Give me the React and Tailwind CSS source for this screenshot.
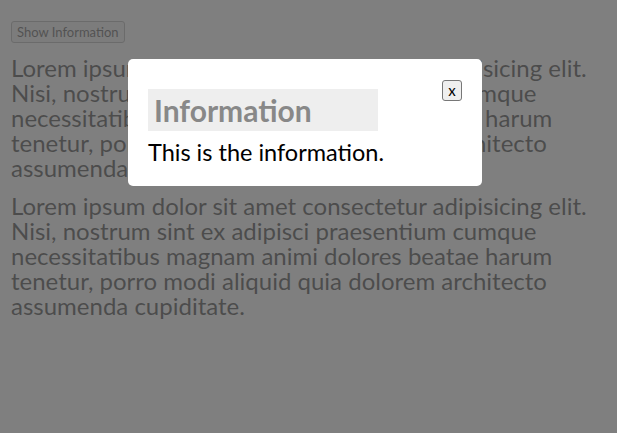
import React, { useState } from 'react';

const lorem =
  'Lorem ipsum dolor sit amet consectetur adipisicing elit. Nisi, nostrum sint ex adipisci praesentium cumque necessitatibus magnam animi dolores beatae harum tenetur, porro modi aliquid quia dolorem architecto assumenda cupiditate.';

const App = () => {
  const [open, setOpen] = useState(true);

  return (
    <div className="min-h-[433px] bg-white font-['Lato','Liberation_Sans',sans-serif] text-black">
      <div className="px-[11px] pt-[21px]">
        <button
          onClick={() => setOpen(true)}
          className="block h-[22px] px-[5px] text-[13px] leading-none text-[#222] bg-[#efefef] border border-[#999] rounded-[3px]"
        >
          Show Information
        </button>
        <p className="mt-[12px] text-[24px] leading-[25px] text-black">{lorem}</p>
        <p className="mt-[13px] text-[24px] leading-[25px] text-black">{lorem}</p>
      </div>

      {open && (
        <div className="fixed inset-0 bg-[rgba(95,95,95,0.8)]">
          {/* modal card */}
          <div className="absolute left-[128px] top-[59px] w-[354px] h-[127px] bg-white rounded-[5px] px-[20px] pt-[30px]">
            <button
              onClick={() => setOpen(false)}
              className="absolute right-[20px] top-[21px] w-[20px] h-[21px] flex items-center justify-center text-[15px] leading-none bg-[#efefef] border border-[#777] rounded-[3px]"
            >
              x
            </button>
            <h2 className="w-[230px] h-[42px] bg-[#eeeeee] px-[6px] flex items-center text-[30px] font-bold text-[#888888]">
              Information
            </h2>
            <p className="mt-[8px] text-[23.5px] leading-[26px]">This is the information.</p>
          </div>
        </div>
      )}
    </div>
  );
};

export default App;
